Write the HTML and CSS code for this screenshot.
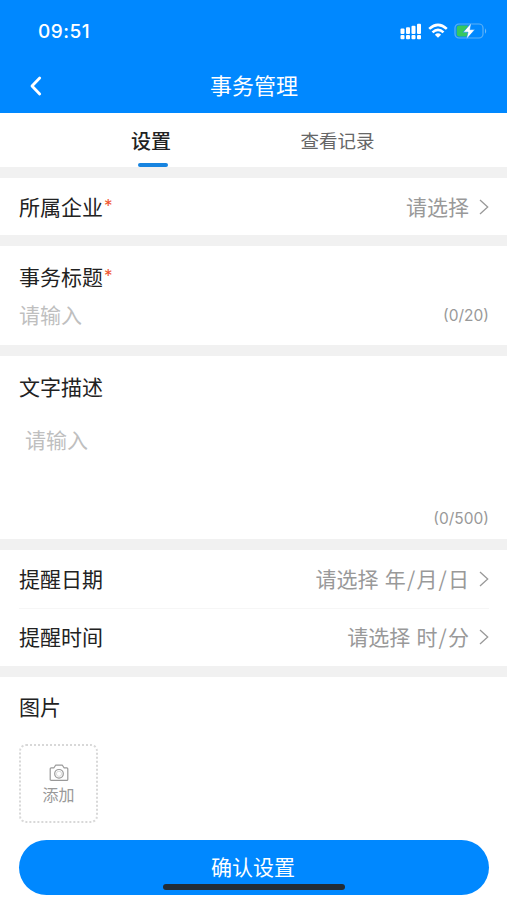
FILE: index.html
```html
<!DOCTYPE html>
<html lang="zh-CN">

<head>
    <meta charset="UTF-8">
    <meta name="viewport" content="width=device-width, initial-scale=1.0">
    <title>事务管理</title>
    <link rel="stylesheet" href="styles.css">
</head>

<body>
    <header class="header">
        <div class="status-bar">
            <span class="time">09:51</span>
            <div class="status-icons">
                <svg width="22" height="17" viewBox="0 0 22 17" fill="#fff">
                    <rect x="0.5" y="5.5" width="4" height="5.4" rx="1" />
                    <rect x="6" y="4.3" width="4" height="6.6" rx="1" />
                    <rect x="11.5" y="2.8" width="4" height="8.1" rx="1" />
                    <rect x="17" y="0.8" width="4" height="10.1" rx="1" />
                    <rect x="0.5" y="12" width="4" height="4.3" rx="1" />
                    <rect x="6" y="12" width="4" height="4.3" rx="1" />
                    <rect x="11.5" y="12" width="4" height="4.3" rx="1" />
                    <rect x="17" y="12" width="4" height="4.3" rx="1" />
                </svg>
                <svg width="20" height="16" viewBox="0 0 20 16" fill="none" stroke="#fff" stroke-width="2.6">
                    <path d="M1.2 5.9Q10 -2.1 18.8 5.9" />
                    <path d="M4.5 9.4Q10 4.3 15.5 9.4" />
                    <path d="M6.9 11.7Q10 8.9 13.1 11.7L10 14.8Z" fill="#fff" stroke="none" />
                </svg>
                <svg width="34" height="18" viewBox="0 0 34 18">
                    <rect x="1" y="2" width="28" height="14" rx="4" fill="none" stroke="#5cb0f5" stroke-width="1.2" />
                    <path d="M31 6.2Q33.4 9 31 11.8Z" fill="#6cb9f7" />
                    <path d="M5 3.5H14V14.5H5Q2.7 14.5 2.7 12.2V5.8Q2.7 3.5 5 3.5Z" fill="#37c75f" />
                    <path d="M17.4 0.8L9.2 10.2H14L12.2 17.5L20.9 7.6H16.1Z" fill="#fff" stroke="#0788fb" stroke-width="0.6" />
                </svg>
            </div>
        </div>
        <div class="nav-bar">
            <svg class="back" width="14" height="22" viewBox="0 0 14 22" fill="none" stroke="#fff" stroke-width="2.8" stroke-linecap="round" stroke-linejoin="round">
                <path d="M10.7 3L3 11L10.7 19" />
            </svg>
            <h1>事务管理</h1>
        </div>
    </header>

    <nav class="tabs">
        <a class="tab active">设置</a>
        <a class="tab">查看记录</a>
    </nav>

    <main>
        <section class="card">
            <div class="row company">
                <span class="label">所属企业<i class="required">*</i></span>
                <span class="value">请选择</span>
                <svg class="arrow" width="10" height="16" viewBox="0 0 10 16"><path d="M1 1L8.7 8L1 15" /></svg>
            </div>
        </section>

        <section class="card subject">
            <div class="label">事务标题<i class="required">*</i></div>
            <div class="field">
                <span class="placeholder">请输入</span>
                <span class="count">(0/20)</span>
            </div>
        </section>

        <section class="card description">
            <div class="label">文字描述</div>
            <div class="placeholder">请输入</div>
            <span class="count">(0/500)</span>
        </section>

        <section class="card">
            <div class="row">
                <span class="label">提醒日期</span>
                <span class="value">请选择 年<b>/</b>月<b>/</b>日</span>
                <svg class="arrow" width="10" height="16" viewBox="0 0 10 16"><path d="M1 1L8.7 8L1 15" /></svg>
            </div>
            <div class="row">
                <span class="label">提醒时间</span>
                <span class="value">请选择 时<b>/</b>分</span>
                <svg class="arrow" width="10" height="16" viewBox="0 0 10 16"><path d="M1 1L8.7 8L1 15" /></svg>
            </div>
        </section>

        <section class="card pictures">
            <div class="label">图片</div>
            <div class="upload">
                <svg width="20" height="18" viewBox="0 0 20 18" fill="none" stroke="#999" stroke-width="1.2" stroke-linejoin="round">
                    <path d="M2.2 3.8H5L6.6 1.2H13.4L15 3.8H17.8Q18.8 3.8 18.8 4.8V15.4Q18.8 16.4 17.8 16.4H2.2Q1.2 16.4 1.2 15.4V4.8Q1.2 3.8 2.2 3.8Z" />
                    <circle cx="10" cy="9.8" r="4.3" />
                    <circle cx="10" cy="9.8" r="2.6" stroke="#ccc" stroke-width="0.7" />
                </svg>
                <span>添加</span>
            </div>
            <button class="submit">确认设置</button>
        </section>
    </main>
    <div class="home-indicator"></div>
</body>

</html>
```
FILE: styles.css
```css
* {
    box-sizing: border-box;
}

body {
    margin: 0;
    height: 900px;
    overflow: hidden;
    position: relative;
    background: #f1f1f1;
    color: #222;
    font-family: "Noto Sans CJK SC", sans-serif;
    font-size: 21px;
    line-height: 30px;
}

svg {
    display: block;
}

.header {
    height: 113px;
    background: #0088ff;
    color: #fff;
}

.status-bar {
    display: flex;
    align-items: center;
    justify-content: space-between;
    height: 62px;
    padding: 0 19px 0 38px;
}

.time {
    padding-top: 1px;
    font-family: Inter, sans-serif;
    font-size: 19px;
    font-weight: 500;
    letter-spacing: 0.5px;
}

.status-icons {
    display: flex;
    align-items: center;
    gap: 6px;
}

.nav-bar {
    display: grid;
    grid-template-columns: 50px 1fr 50px;
    align-items: center;
    height: 47px;
}

.back {
    margin-left: 29px;
}

.nav-bar h1 {
    margin: 0;
    padding: 0 0 3px 1px;
    font-size: 22px;
    font-weight: 400;
    text-align: center;
}

.tabs {
    display: grid;
    grid-template-columns: 185px 185px;
    justify-content: center;
    height: 54px;
    padding-right: 17px;
    background: #fff;
}

.tab {
    display: flex;
    flex-direction: column;
    align-items: center;
    padding-top: 12px;
    font-size: 18.5px;
    color: #666;
}

.tab.active {
    padding-top: 13px;
    padding-right: 3px;
    font-size: 20px;
    font-weight: 500;
    color: #222;
}

.tab.active::after {
    content: "";
    width: 30px;
    height: 4px;
    margin-top: 7px;
    margin-left: 3px;
    border-radius: 2px;
    background: #1784e0;
}

main {
    display: flex;
    flex-direction: column;
    gap: 11px;
    padding-top: 11px;
}

.card {
    padding: 0 18px 0 19px;
    background: #fff;
}

.row {
    display: flex;
    align-items: center;
    height: 58px;
    padding-bottom: 2px;
}

.row + .row {
    padding-bottom: 3px;
    border-top: 1px solid #f6f6f6;
}

.company {
    height: 57px;
    padding-bottom: 1px;
}

.required {
    font-family: Inter, sans-serif;
    font-size: 17px;
    font-style: normal;
    line-height: 1;
    vertical-align: 3px;
    color: #f0532d;
    margin-left: 1px;
}

.value {
    margin-left: auto;
    color: #999;
    word-spacing: 1.5px;
}

.value b {
    margin: 0 1.2px;
    font-weight: 400;
}

.arrow {
    margin-left: 10px;
    margin-top: 1px;
    fill: none;
    stroke: #999;
    stroke-width: 1.3;
}

.placeholder {
    color: #bfbfbf;
}

.count {
    font-family: Inter, sans-serif;
    font-size: 15.5px;
    color: #999;
}

.subject {
    height: 99px;
    padding-top: 15px;
}

.field {
    display: flex;
    align-items: center;
    justify-content: space-between;
    margin-top: 8px;
}

.subject .placeholder {
    padding-bottom: 2px;
}

.subject .count {
    padding-top: 1px;
}

.description {
    display: flex;
    flex-direction: column;
    height: 183px;
    padding-top: 15px;
}

.description .placeholder {
    margin: 23px 0 0 6px;
}

.description .count {
    margin: auto 0 5px auto;
}

.pictures {
    height: 223px;
    padding-top: 14px;
}

.upload {
    display: flex;
    flex-direction: column;
    align-items: center;
    justify-content: center;
    width: 79px;
    height: 79px;
    margin-top: 23px;
    padding-top: 2px;
    border: 2px dotted #d8d8d8;
    border-radius: 7px;
    color: #999;
    font-size: 16px;
    line-height: 24px;
}

.submit {
    display: block;
    width: 100%;
    height: 55px;
    margin-top: 17px;
    padding: 0 2px 3px 0;
    border: none;
    border-radius: 28px;
    background: #0088ff;
    color: #fff;
    font: inherit;
}

/* sits over the submit button */
.home-indicator {
    position: absolute;
    left: 163px;
    top: 884px;
    width: 182px;
    height: 6px;
    border-radius: 3px;
    background: #222c36;
}
```
